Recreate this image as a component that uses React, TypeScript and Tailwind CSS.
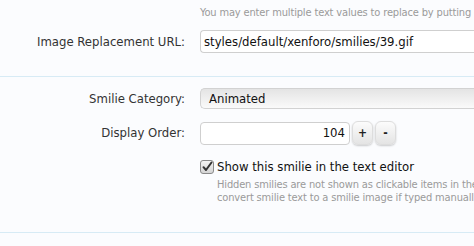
import React from 'react';

const font = { fontFamily: '"DejaVu Sans Condensed", Tahoma, "DejaVu Sans", sans-serif' };

const Label: React.FC<{ children: React.ReactNode }> = ({ children }) => (
  <div className="w-[185px] shrink-0 text-right text-[13px] text-[#333]">{children}</div>
);

const StepButton: React.FC<{ children: React.ReactNode }> = ({ children }) => (
  <button className="flex h-[24px] w-[21px] items-center justify-center rounded-[6px] border border-[#dddddd] bg-gradient-to-b from-[#fcfcfc] to-[#e4e4e4] text-[12px] font-bold leading-none text-[#222] shadow-[0_1px_2px_rgba(0,0,0,0.2)]">
    {children}
  </button>
);

export default function App() {
  return (
    <div className="h-[246px] w-[474px] overflow-hidden bg-[#fbfcfe]" style={font}>
      {/* url block */}
      <div className="flex flex-col border-b border-[#d7ebf5] pb-[23px]">
        <div className="pl-[200px] pt-[6px] text-[11px] leading-[14px] tracking-[-0.15px] whitespace-nowrap text-[#9a9a9a]">
          You may enter multiple text values to replace by putting each on its own line.
        </div>
        <div className="mt-[10px] flex items-center gap-[15px]">
          <Label>Image Replacement URL:</Label>
          <div className="flex h-[23px] flex-1 items-center rounded-l-[4px] border border-r-0 border-[#cfcfcf] bg-white pl-[3px] text-[13px] whitespace-nowrap text-[#111]">
            styles/default/xenforo/smilies/39.gif
          </div>
        </div>
      </div>

      {/* options block */}
      <div className="flex flex-col border-b border-[#d7ebf5] pt-[11px] pb-[28px]">
        <div className="flex items-center gap-[15px]">
          <Label>Smilie Category:</Label>
          <div className="flex h-[21px] flex-1 items-center rounded-l-[5px] border border-r-0 border-[#d2d2d2] bg-gradient-to-b from-[#e4e4e4] to-[#fafafa] pl-[8px] text-[13px] text-[#111]">
            Animated
          </div>
        </div>
        <div className="mt-[12px] flex items-center gap-[15px]">
          <Label>Display Order:</Label>
          <div className="flex items-center gap-[2px]">
            <div className="flex h-[23px] w-[150px] items-center justify-end rounded-[4px] border border-[#cfcfcf] bg-white pr-[4px] text-[13px] text-[#111]">
              104
            </div>
            <StepButton>+</StepButton>
            <StepButton>-</StepButton>
          </div>
        </div>
        <div className="mt-[12px] pl-[200px]">
          <label className="flex items-center gap-[3px] text-[13px] text-[#111]">
            <span className="flex h-[14px] w-[14px] items-center justify-center rounded-[3px] border border-[#8a8a8a] bg-gradient-to-b from-[#f4f4f4] to-[#d4d4d4]">
              <svg viewBox="0 0 12 12" className="h-[12px] w-[12px]">
                <path d="M2.5 6.2 L5 9 L10.5 1.5" fill="none" stroke="#333" strokeWidth="2" strokeLinecap="round" strokeLinejoin="round" />
              </svg>
            </span>
            Show this smilie in the text editor
          </label>
          <div className="mt-[1px] pl-[17px] text-[11px] leading-[13px] tracking-[-0.15px] whitespace-nowrap text-[#9a9a9a]">
            <div>Hidden smilies are not shown as clickable items in the editor, but the system will still</div>
            <div>convert smilie text to a smilie image if typed manually.</div>
          </div>
        </div>
      </div>
    </div>
  );
}
